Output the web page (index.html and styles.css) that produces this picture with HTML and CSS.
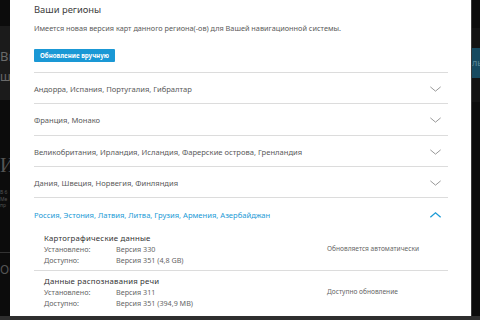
FILE: index.html
```html
<!DOCTYPE html>
<html>
<head>
<meta charset="utf-8">
<title>Ваши регионы</title>
<link rel="stylesheet" href="styles.css">
</head>
<body>
<div class="screen">
	<div class="side side-left">
		<div class="band">
			<div class="band-big">Вы</div>
			<div class="band-small">шн</div>
		</div>
		<div class="big-letter">И</div>
		<div class="tiny">
			<div>В 6</div>
			<div>Ме</div>
			<div>пр</div>
		</div>
		<div class="side-line"></div>
		<div class="side-ob">Об</div>
	</div>

	<div class="modal">
		<h1 class="title">Ваши регионы</h1>
		<p class="intro">Имеется новая версия карт данного региона(-ов) для Вашей навигационной системы.</p>
		<button class="btn">Обновление вручную</button>

		<ul class="regions">
			<li class="region">
				<span>Андорра, Испания, Португалия, Гибралтар</span>
				<svg class="chev" viewBox="0 0 14 7"><path d="M1 1l6 5 6-5"/></svg>
			</li>
			<li class="region">
				<span>Франция, Монако</span>
				<svg class="chev" viewBox="0 0 14 7"><path d="M1 1l6 5 6-5"/></svg>
			</li>
			<li class="region">
				<span>Великобритания, Ирландия, Исландия, Фарерские острова, Гренландия</span>
				<svg class="chev" viewBox="0 0 14 7"><path d="M1 1l6 5 6-5"/></svg>
			</li>
			<li class="region">
				<span>Дания, Швеция, Норвегия, Финляндия</span>
				<svg class="chev" viewBox="0 0 14 7"><path d="M1 1l6 5 6-5"/></svg>
			</li>
			<li class="region region-open">
				<span>Россия, Эстония, Латвия, Литва, Грузия, Армения, Азербайджан</span>
				<svg class="chev" viewBox="0 0 14 7"><path d="M1 6l6-5 6 5"/></svg>
			</li>
		</ul>

		<div class="detail">
			<div class="detail-name">Картографические данные</div>
			<div class="detail-grid">
				<span>Установлено:</span><span>Версия 330</span><span class="note">Обновляется автоматически</span>
				<span>Доступно:</span><span>Версия 351 (4,8 GB)</span><span></span>
			</div>
		</div>
		<div class="detail">
			<div class="detail-name">Данные распознавания речи</div>
			<div class="detail-grid">
				<span>Установлено:</span><span>Версия 311</span><span class="note">Доступно обновление</span>
				<span>Доступно:</span><span>Версия 351 (394,9 MB)</span><span></span>
			</div>
		</div>
	</div>

	<div class="side side-right">
		<div class="band band-r">
			<div class="teal">ль</div>
		</div>
	</div>
</div>
<div class="bottom"></div>
</body>
</html>
```

FILE: styles.css
```css
html, body {
	margin: 0;
	background: #0c0c0c;
	font-family: "Noto Sans", "Open Sans", sans-serif;
}
.screen {
	display: flex;
	height: 316px;
	overflow: hidden;
}
.bottom {
	height: 4px;
	background: #2e2e2e;
}
.side {
	overflow: hidden;
	white-space: nowrap;
	color: #6a6a6a;
}
.side-left {
	width: 10px;
}
.side-right {
	width: 8px;
	border-left: 1px solid #3a3a3a;
}
.band {
	margin-top: 26px;
	height: 74px;
	background: #1b1b1b;
	padding-top: 22px;
	box-sizing: border-box;
}
.band-big {
	font-size: 13px;
	line-height: 16px;
}
.band-small {
	font-size: 12px;
	margin-top: 4px;
}
.band-r {
	margin-top: 28px;
	background: #131313;
	padding-top: 20px;
}
.teal {
	height: 30px;
	background: #174a60;
	color: #5c8796;
	font-size: 9px;
	line-height: 30px;
}
.big-letter {
	margin-top: 54px;
	font-family: "Liberation Serif", serif;
	font-size: 20px;
	line-height: 23px;
	color: #555;
}
.tiny {
	margin-top: 12px;
	font-size: 5px;
	line-height: 6.5px;
	color: #555;
}
.side-line {
	margin-top: 43px;
	border-top: 1px solid #333;
}
.side-ob {
	margin-top: 9px;
	font-size: 12px;
	line-height: 16px;
	color: #555;
}

.modal {
	width: 414px;
	padding: 0 23px 0 24px;
	background: #fff;
	color: #5a5a5a;
}
.title {
	margin: 3px 0 0;
	font-size: 9.4px;
	line-height: 14px;
	font-weight: normal;
	color: #3d3d3d;
}
.intro {
	margin: 5px 0 0;
	font-size: 7.3px;
	line-height: 12px;
}
.btn {
	display: block;
	margin-top: 15px;
	height: 13px;
	padding: 0 6px;
	border: 0;
	border-radius: 1px;
	background: #1a98d5;
	color: #fff;
	font-family: inherit;
	font-size: 6.2px;
	font-weight: bold;
}
.regions {
	list-style: none;
	margin: 10px 0 0;
	padding: 0;
	border-top: 1px solid #dcdcdc;
}
.region {
	display: flex;
	align-items: center;
	justify-content: space-between;
	height: 31.3px;
	padding-top: 2px;
	box-sizing: border-box;
	border-bottom: 1px solid #dcdcdc;
	font-size: 7.6px;
}
.chev {
	width: 13px;
	height: 6px;
	margin-right: 6px;
	fill: none;
	stroke: #888;
	stroke-width: 1;
}
.region-open {
	border-bottom: 0;
	color: #1a9ad6;
}
.region-open .chev {
	stroke: #1a9ad6;
	stroke-width: 1.5;
}
.detail {
	padding: 4px 0 5px 10px;
	font-size: 7.2px;
	line-height: 10.4px;
}
.detail + .detail {
	border-top: 1px solid #dcdcdc;
	padding-top: 5px;
}
.detail-name {
	color: #333;
	font-size: 7.8px;
	line-height: 11px;
	letter-spacing: 0.2px;
}
.detail-grid {
	display: grid;
	grid-template-columns: 72px 211px 1fr;
	color: #666;
}
.note {
	font-size: 6.6px;
}
```
